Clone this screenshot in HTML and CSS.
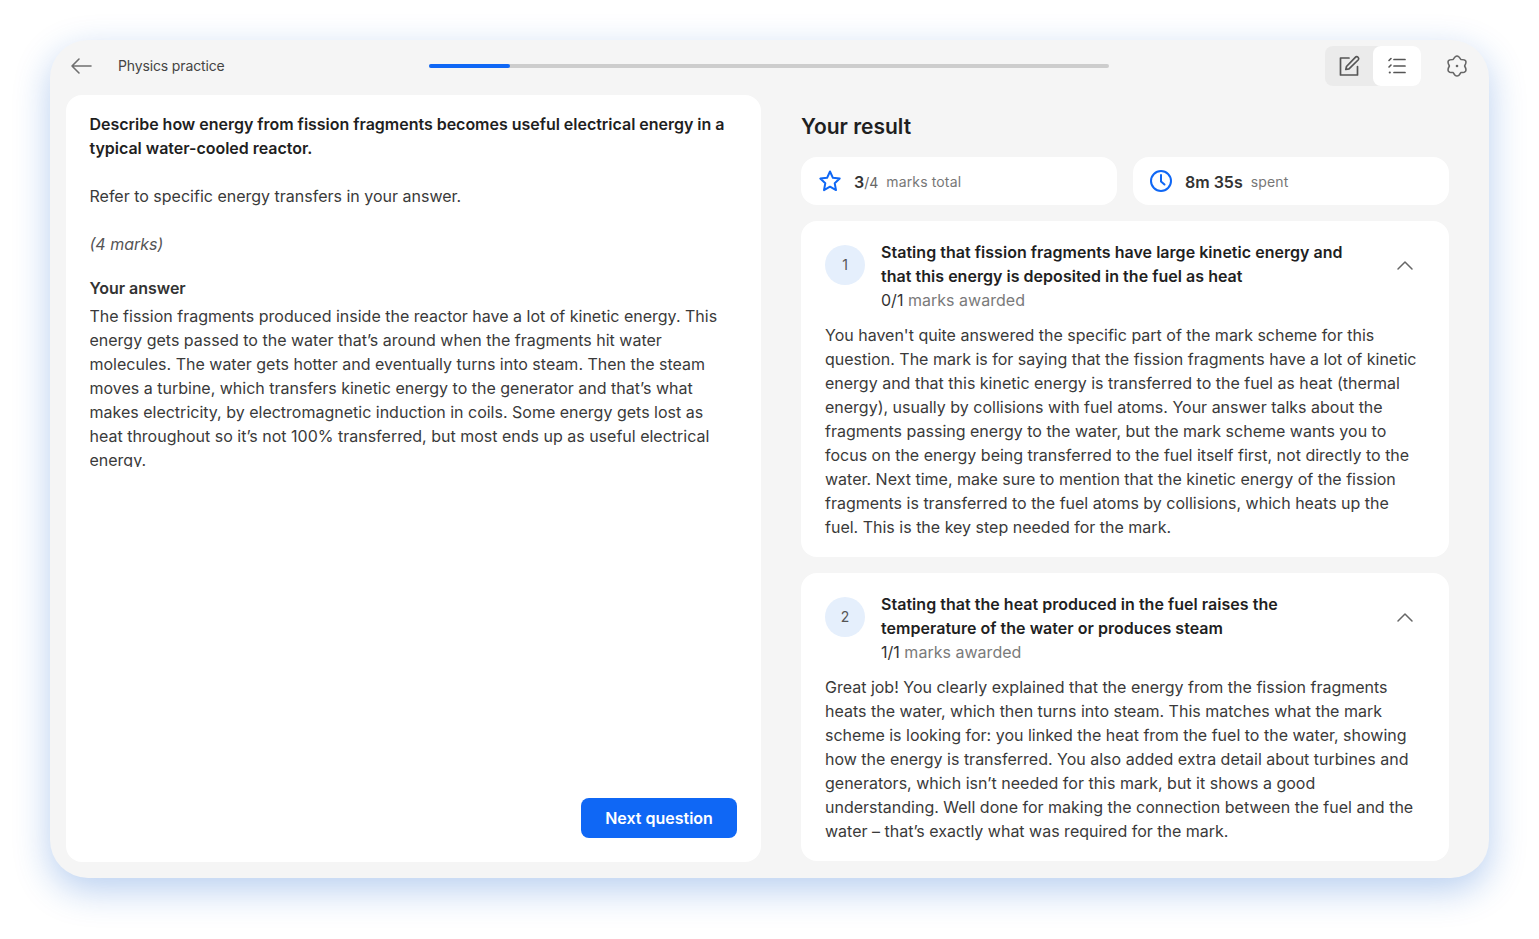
FILE: index.html
```html
<!DOCTYPE html>
<html lang="en">
<head>
<meta charset="utf-8">
<title>Physics practice</title>
<link rel="stylesheet" href="styles.css">
</head>
<body>
<main class="app">
  <header class="topbar">
    <svg class="back" width="24" height="24" viewBox="0 0 24 24" fill="none" stroke="#6f6f6f" stroke-width="1.6" stroke-linecap="round" stroke-linejoin="round"><path d="M22 12H3M10 5l-7 7 7 7"/></svg>
    <span class="crumb">Physics practice</span>
    <div class="progress"><div class="progress-fill"></div></div>
    <div class="toggle">
      <span class="toggle-btn">
        <svg width="24" height="24" viewBox="0 0 24 24" fill="none" stroke="#555" stroke-width="1.7" stroke-linecap="round" stroke-linejoin="round"><path d="M12 4H3.500v17h17v-8.500"/><path d="M9.500 12.500 18.300 3.300a1.900 1.900 0 0 1 2.800 2.700L12 14.800l-3.200.7z"/></svg>
      </span>
      <span class="toggle-btn active">
        <svg width="24" height="24" viewBox="0 0 24 24" fill="none" stroke="#555" stroke-width="1.700" stroke-linecap="round"><path d="M9 5.500h11M9 12h11M9 18.500h11"/><path d="M4 6.500 6 4.500M4 13l2-2" stroke-width="1.600"/><circle cx="4.800" cy="18.500" r="1.100" fill="#555" stroke="none"/></svg>
      </span>
    </div>
    <svg class="gear" width="24" height="24" viewBox="0 0 24 24" fill="none" stroke="#666" stroke-width="1.500" stroke-linejoin="round"><path d="M8.200 5.420Q12 -1.500 15.800 5.420Q23.690 5.250 19.600 12Q23.690 18.750 15.800 18.580Q12 25.500 8.200 18.580Q.31 18.750 4.400 12Q.31 5.250 8.200 5.420z"/><circle cx="12" cy="12" r="1.300" fill="#666" stroke="none"/></svg>
  </header>
  <div class="columns">
    <section class="question">
      <p class="q-title">Describe how energy from fission fragments becomes useful electrical energy in a typical water-cooled reactor.</p>
      <p class="q-text">Refer to specific energy transfers in your answer.</p>
      <p class="q-marks">(4 marks)</p>
      <h2 class="answer-label">Your answer</h2>
      <p class="answer">The fission fragments produced inside the reactor have a lot of kinetic energy. This energy gets passed to the water that’s around when the fragments hit water molecules. The water gets hotter and eventually turns into steam. Then the steam moves a turbine, which transfers kinetic energy to the generator and that’s what makes electricity, by electromagnetic induction in coils. Some energy gets lost as heat throughout so it’s not 100% transferred, but most ends up as useful electrical energy.</p>
      <div class="actions"><button class="next" type="button">Next question</button></div>
    </section>
    <section class="result">
      <h1 class="result-title">Your result</h1>
      <div class="stats">
        <div class="stat">
          <svg class="star" width="24" height="24" viewBox="0 0 24 24" fill="none" stroke="#0f67f5" stroke-width="2" stroke-linejoin="round"><path d="M12 2.500l2.900 6.300 6.800.8-5 4.700 1.300 6.800-6-3.400-6 3.400 1.300-6.800-5-4.700 6.800-.8z"/></svg>
          <span class="stat-main"><b>3</b><span class="stat-sub">/4</span></span>
          <span class="stat-note">marks total</span>
        </div>
        <div class="stat">
          <svg width="24" height="24" viewBox="0 0 24 24" fill="none" stroke="#0f67f5" stroke-width="2" stroke-linecap="round" stroke-linejoin="round"><circle cx="12" cy="12" r="10"/><path d="M12 6v6.500l3.500 3"/></svg>
          <span class="stat-main"><b>8m 35s</b></span>
          <span class="stat-note">spent</span>
        </div>
      </div>
      <article class="card">
        <div class="card-head">
          <span class="num">1</span>
          <div class="head-text">
            <h3 class="card-title">Stating that fission fragments have large kinetic energy and that this energy is deposited in the fuel as heat</h3>
            <p class="awarded"><span class="score">0/1</span> marks awarded</p>
          </div>
          <svg class="chev" width="24" height="24" viewBox="0 0 24 24" fill="none" stroke="#666" stroke-width="1.500" stroke-linecap="round" stroke-linejoin="round"><path d="M5 16l7-7 7 7"/></svg>
        </div>
        <p class="card-body">You haven't quite answered the specific part of the mark scheme for this question. The mark is for saying that the fission fragments have a lot of kinetic energy and that this kinetic energy is transferred to the fuel as heat (thermal energy), usually by collisions with fuel atoms. Your answer talks about the fragments passing energy to the water, but the mark scheme wants you to focus on the energy being transferred to the fuel itself first, not directly to the water. Next time, make sure to mention that the kinetic energy of the fission fragments is transferred to the fuel atoms by collisions, which heats up the fuel. This is the key step needed for the mark.</p>
      </article>
      <article class="card">
        <div class="card-head">
          <span class="num">2</span>
          <div class="head-text">
            <h3 class="card-title">Stating that the heat produced in the fuel raises the temperature of the water or produces steam</h3>
            <p class="awarded"><span class="score">1/1</span> marks awarded</p>
          </div>
          <svg class="chev" width="24" height="24" viewBox="0 0 24 24" fill="none" stroke="#666" stroke-width="1.500" stroke-linecap="round" stroke-linejoin="round"><path d="M5 16l7-7 7 7"/></svg>
        </div>
        <p class="card-body">Great job! You clearly explained that the energy from the fission fragments heats the water, which then turns into steam. This matches what the mark scheme is looking for: you linked the heat from the fuel to the water, showing how the energy is transferred. You also added extra detail about turbines and generators, which isn’t needed for this mark, but it shows a good understanding. Well done for making the connection between the fuel and the water – that’s exactly what was required for the mark.</p>
      </article>
    </section>
  </div>
</main>
</body>
</html>
```
FILE: styles.css
```css
* { box-sizing: border-box; }
html, body { margin: 0; height: 100%; }
body {
  background: #fff;
  padding: 40px 50px 61px;
  font-family: Inter, "Liberation Sans", sans-serif;
  font-size: 16px;
  line-height: 24px;
  color: #3a3a3a;
  overflow: hidden;
}
.app {
  height: 838px;
  background: #f5f5f5;
  border-radius: 38px;
  box-shadow: 0 12px 36px rgba(20, 95, 205, 0.3);
  display: flex;
  flex-direction: column;
  padding: 0 40px 16px 16px;
}
.topbar {
  height: 55px;
  flex: none;
  display: flex;
  align-items: center;
  padding: 0 0 4px 4px;
}
.back { flex: none; margin-left: -1px; }
.crumb { margin-left: 25px; font-size: 14px; color: #444; width: 311px; flex: none; letter-spacing: -0.01em; }
.progress { width: 680px; height: 4px; border-radius: 2px; background: #cdcdcd; flex: none; }
.progress-fill { width: 81px; height: 100%; border-radius: 2px; background: #0f67f5; }
.toggle {
  margin-left: 216px;
  display: flex;
  width: 96px;
  height: 40px;
  background: #ebebeb;
  border-radius: 8px;
  flex: none;
}
.toggle-btn { width: 48px; display: flex; align-items: center; justify-content: center; border-radius: 8px; }
.toggle-btn.active { background: #fff; }
.gear { flex: none; margin-left: 24px; }
.columns { flex: 1; min-height: 0; display: flex; gap: 40px; }
.question {
  width: 695px;
  flex: none;
  background: #fff;
  border-radius: 16px;
  padding: 17px 24px 24px 23.5px;
  display: flex;
  flex-direction: column;
}
.question p { margin: 0; }
.q-title { font-weight: 600; color: #1f1f1f; letter-spacing: -0.02px; }
.q-text { margin-top: 24px !important; }
.q-marks { margin-top: 24px !important; font-style: italic; color: #555; }
.answer-label { margin: 20px 0 4px; font-size: 16px; line-height: 24px; font-weight: 600; color: #333; letter-spacing: -0.03px; }
.answer { height: 163px; overflow: hidden; }
.actions { margin-top: auto; display: flex; justify-content: flex-end; }
.next {
  width: 156px;
  height: 40px;
  border: 0;
  border-radius: 8px;
  background: #0f67f5;
  color: #fff;
  font: 600 16px/24px Inter, "Liberation Sans", sans-serif;
}
.result { flex: 1; min-width: 0; display: flex; flex-direction: column; gap: 16px; }
.result-title { margin: 0; height: 46px; padding-top: 18px; font-size: 21px; line-height: 28px; font-weight: 600; color: #1f1f1f; }
.stats { display: flex; gap: 16px; }
.stat {
  flex: 1;
  height: 48px;
  background: #fff;
  border-radius: 16px;
  display: flex;
  align-items: center;
  padding: 2px 16px 0;
  gap: 12px;
}
.stat svg { margin-top: -2px; }
.star { margin-left: 1px; }
.stat-main b { font-weight: 600; color: #333; }
.stat-sub { font-size: 14px; color: #666; }
.stat-note { font-size: 14px; color: #777; margin-left: -4px; letter-spacing: 0.01em; }
.card { background: #fff; border-radius: 16px; padding: 19px 24px 18px; }
.card-head { display: flex; align-items: center; gap: 16px; }
.num {
  width: 40px;
  height: 40px;
  flex: none;
  border-radius: 50%;
  background: #e5effc;
  color: #555;
  font-size: 14px;
  display: flex;
  align-items: center;
  justify-content: center;
  margin-bottom: 22px;
}
.head-text { flex: 1; min-width: 0; padding-right: 24px; }
.card-title { margin: 0; font-size: 16px; line-height: 24px; font-weight: 600; color: #1f1f1f; letter-spacing: 0.03px; }
.awarded { margin: 0; color: #7a7a7a; letter-spacing: 0.02px; }
.score { color: #333; }
.chev { flex: none; margin-bottom: 22px; margin-right: 8px; }
.card-body { margin: 11px 0 0; }
```
